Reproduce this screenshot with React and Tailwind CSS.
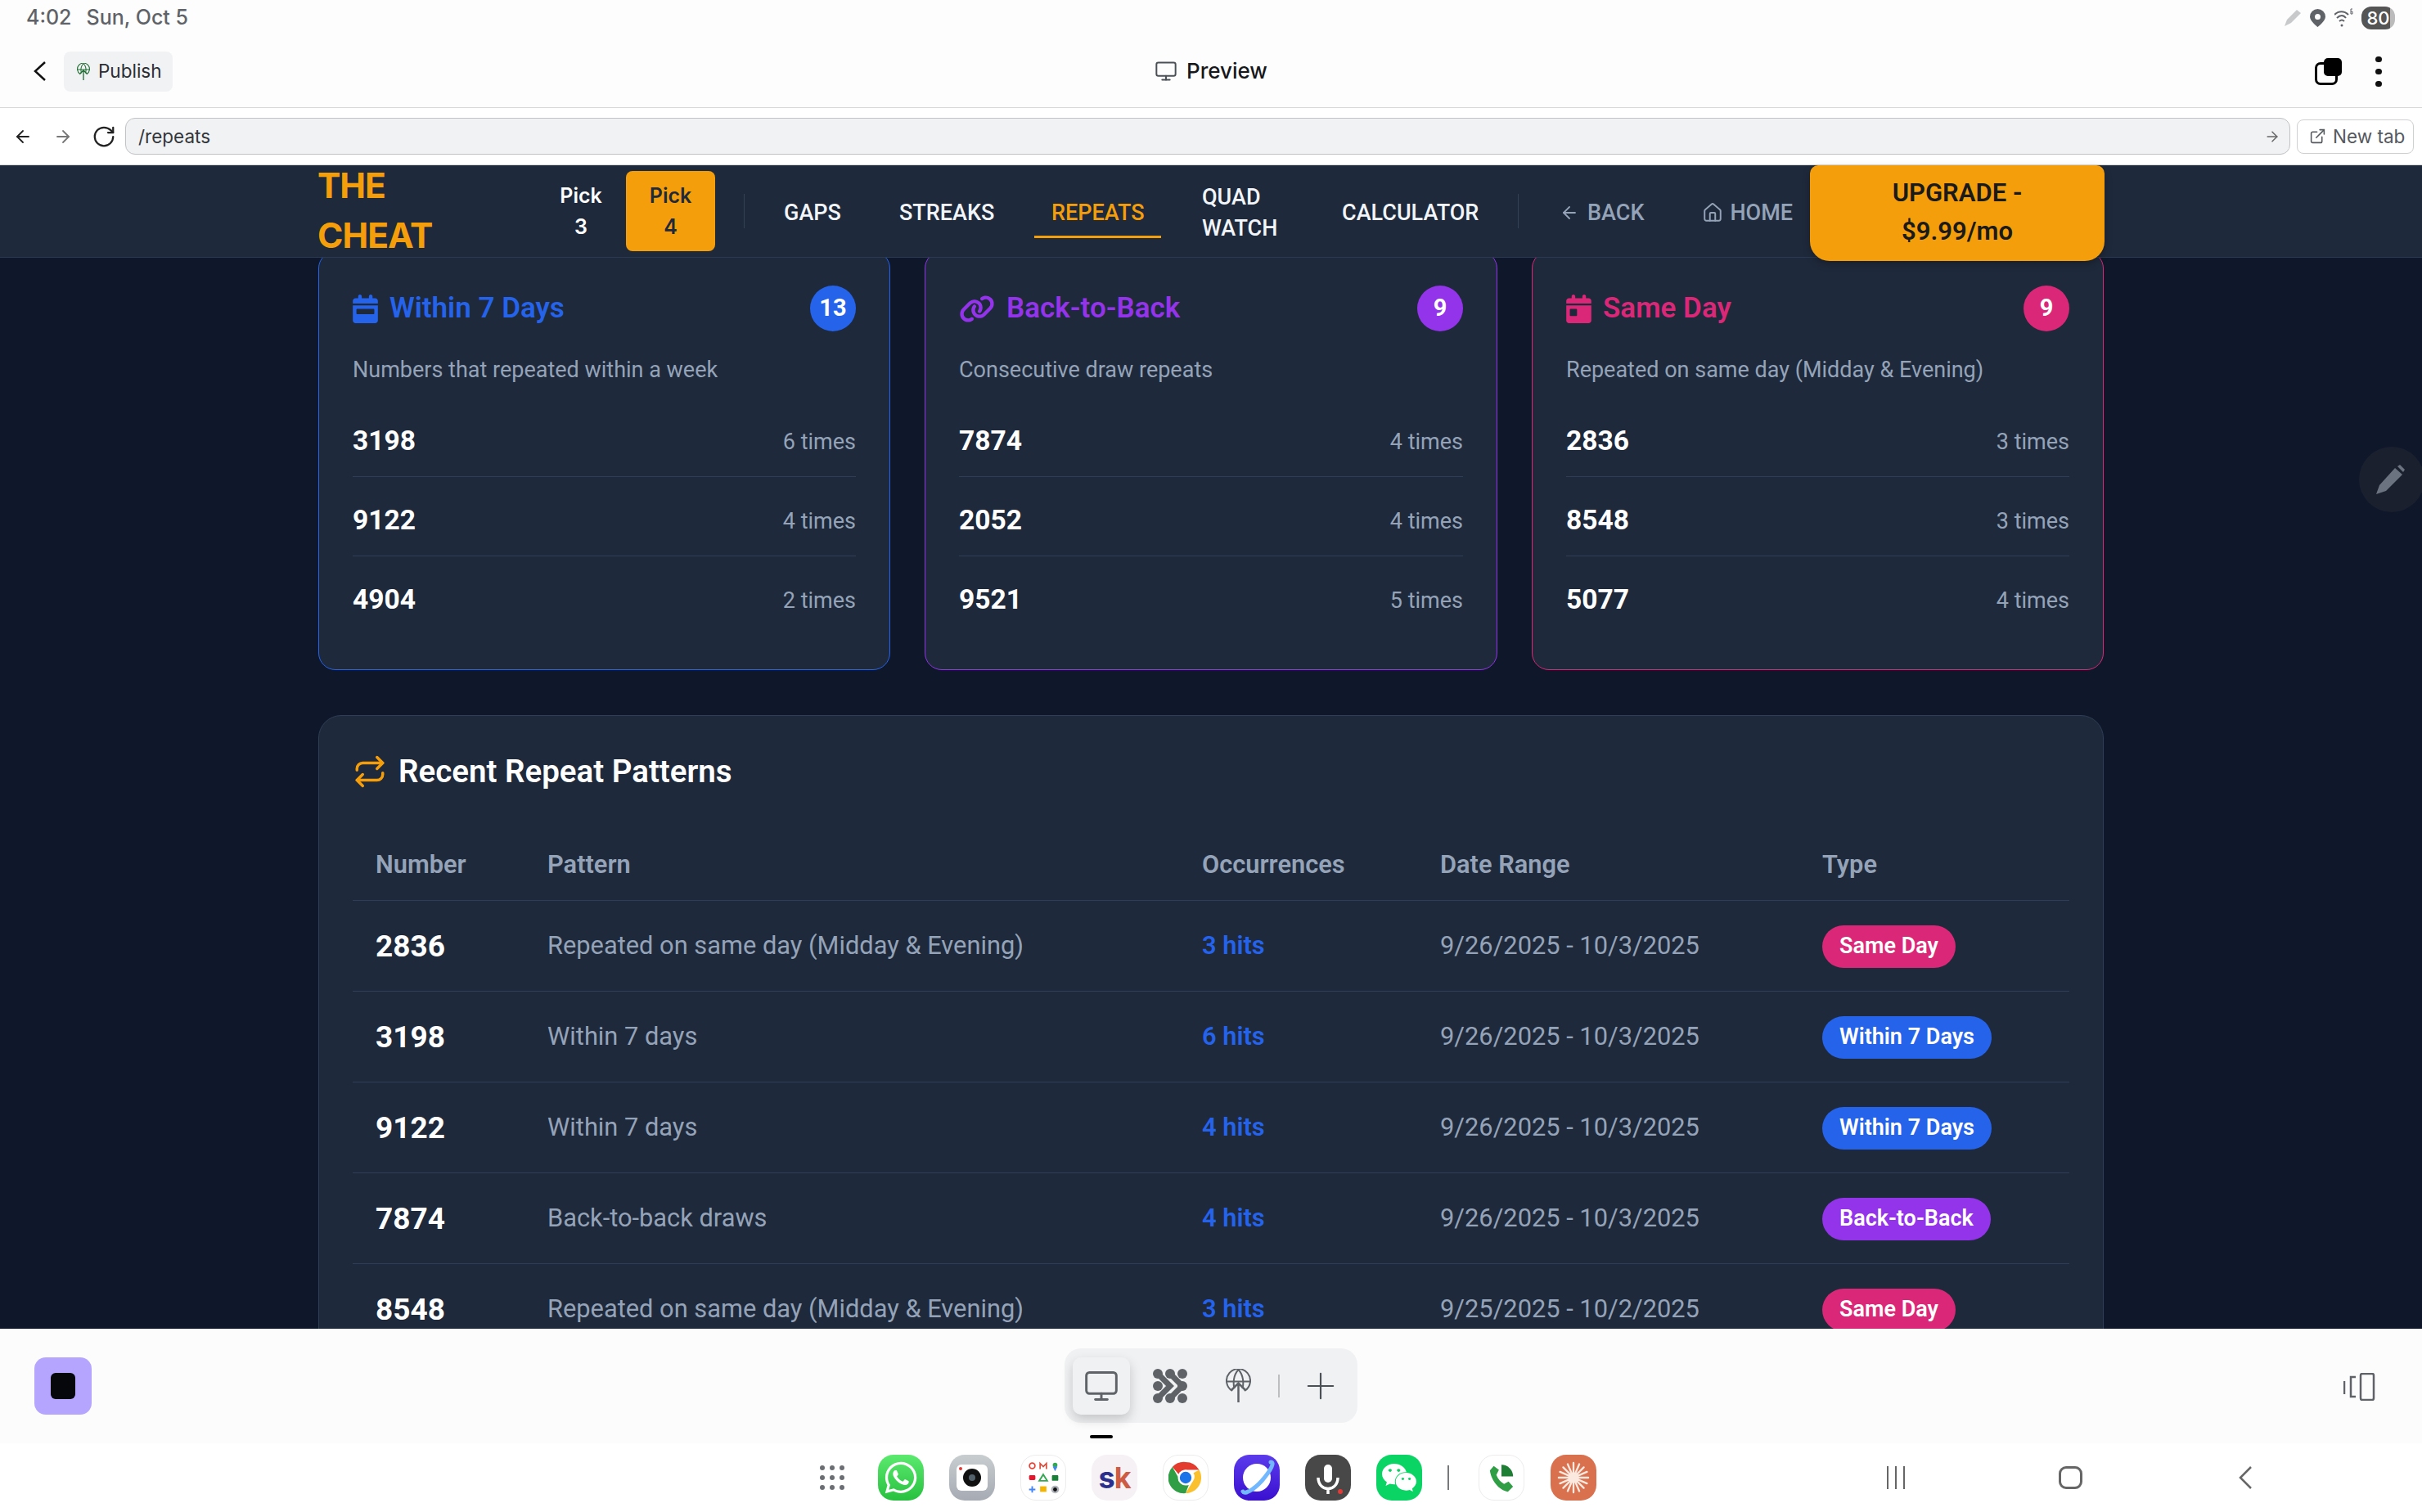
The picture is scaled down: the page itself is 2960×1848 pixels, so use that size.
import React from "react";
import {
  ArrowLeft,
  ArrowRight,
  ExternalLink,
  House,
  Monitor,
  Plus,
  Repeat,
  RotateCw,
} from "lucide-react";
import { FaCalendarDay, FaCalendarWeek, FaLink, FaWeixin, FaWhatsapp } from "react-icons/fa6";

const cards = [
  {
    title: "Within 7 Days",
    count: 13,
    desc: "Numbers that repeated within a week",
    Icon: FaCalendarWeek,
    iconSize: "w-[31px] h-[35px]",
    border: "border-[#2563eb]",
    text: "text-[#2563eb]",
    bg: "bg-[#2563eb]",
    rows: [["3198", "6 times"], ["9122", "4 times"], ["4904", "2 times"]],
  },
  {
    title: "Back-to-Back",
    count: 9,
    desc: "Consecutive draw repeats",
    Icon: FaLink,
    iconSize: "w-[44px] h-[35px]",
    border: "border-[#9333ea]",
    text: "text-[#9333ea]",
    bg: "bg-[#9333ea]",
    rows: [["7874", "4 times"], ["2052", "4 times"], ["9521", "5 times"]],
  },
  {
    title: "Same Day",
    count: 9,
    desc: "Repeated on same day (Midday & Evening)",
    Icon: FaCalendarDay,
    iconSize: "w-[31px] h-[35px]",
    border: "border-[#db2777]",
    text: "text-[#db2777]",
    bg: "bg-[#db2777]",
    rows: [["2836", "3 times"], ["8548", "3 times"], ["5077", "4 times"]],
  },
];

const patterns = [
  ["2836", "Repeated on same day (Midday & Evening)", "3 hits", "9/26/2025 - 10/3/2025", "Same Day", "bg-[#db2777]"],
  ["3198", "Within 7 days", "6 hits", "9/26/2025 - 10/3/2025", "Within 7 Days", "bg-[#2563eb]"],
  ["9122", "Within 7 days", "4 hits", "9/26/2025 - 10/3/2025", "Within 7 Days", "bg-[#2563eb]"],
  ["7874", "Back-to-back draws", "4 hits", "9/26/2025 - 10/3/2025", "Back-to-Back", "bg-[#9333ea]"],
  ["8548", "Repeated on same day (Midday & Evening)", "3 hits", "9/25/2025 - 10/2/2025", "Same Day", "bg-[#db2777]"],
];

const tableCols = "grid grid-cols-[210px_800px_291px_467px_330px]";

function GlobeUp({ color, className }) {
  return (
    <svg viewBox="0 0 31 41" fill="none" stroke={color} strokeWidth="2" className={className}>
      <path d="M8 27A14.5 14.5 0 1 1 23 27" />
      <path d="M1 15.5H30M15.5 1C9 8 9 18 10.5 24M15.5 1C22 8 22 18 20.5 24" />
      <path d="M15.5 41V18M7 26l8.500-8.500L24 26" strokeWidth="2.500" />
    </svg>
  );
}

function HubIcon() {
  return (
    <svg viewBox="0 0 42 42" className="w-[42px] h-[42px]" fill="#5f6368" stroke="#5f6368">
      <circle cx="6" cy="6" r="6" stroke="none" />
      <circle cx="21" cy="6" r="6" stroke="none" />
      <circle cx="36" cy="6" r="6" stroke="none" />
      <circle cx="6" cy="21" r="6" stroke="none" />
      <circle cx="36" cy="21" r="6" stroke="none" />
      <circle cx="6" cy="36" r="6" stroke="none" />
      <circle cx="21" cy="36" r="6" stroke="none" />
      <circle cx="36" cy="36" r="6" stroke="none" />
      <path d="M6 6L21 21L6 36M21 6L36 21L21 36" fill="none" strokeWidth="7" />
    </svg>
  );
}

function StatusBar() {
  return (
    <div className="h-[40px] pt-[3px] flex items-center justify-between pl-[32px] pr-[33px] bg-[#fdfdfd] text-[#5f6368] font-medium text-[25px]">
      <div className="flex gap-[18px]">
        <span>4:02</span>
        <span>Sun, Oct 5</span>
      </div>
      <div className="flex items-center">
        <svg viewBox="0 0 21 21" className="w-[21px] h-[21px]">
          <path d="M0 21L3 13L15 1L20 5L8 17Z" fill="#c8c9cb" />
        </svg>
        <svg viewBox="0 0 19 22" className="w-[19px] h-[22px] ml-[10px]">
          <path fillRule="evenodd" d="M9.500 0A9.500 9.500 0 0 0 0 9.500C0 15 9.500 22 9.500 22S19 15 19 9.500A9.500 9.500 0 0 0 9.500 0ZM9.500 6A3.500 3.500 0 1 1 9.500 13A3.500 3.500 0 0 1 9.500 6Z" fill="#5f6368" />
        </svg>
        <svg viewBox="0 0 23 24" className="w-[23px] h-[24px] ml-[11px]" fill="none" stroke="#5f6368" strokeWidth="2">
          <path d="M0 8C5 3 12 3 17 8M3 12C7 8 11 8 14 12M6 16C8 14 10 14 12 16" />
          <circle cx="9" cy="21" r="1.500" fill="#5f6368" stroke="none" />
          <path d="M22 1H20V7H22V4H20" strokeWidth="1" />
        </svg>
        <div className="ml-[10px] w-[41px] h-[28px] rounded-[12px] bg-[linear-gradient(90deg,#555_85%,#bbb_85%)] text-white text-[22px] leading-[28px] text-center">
          80
        </div>
      </div>
    </div>
  );
}

function AppBar() {
  return (
    <div className="h-[92px] pt-[3px] flex items-center bg-[#fdfdfd] border-b border-[#d8d8d8] relative">
      <svg viewBox="0 0 16 24" className="w-[16px] h-[24px] ml-[41px]" fill="none" stroke="#111" strokeWidth="2.500">
        <path d="M14 1L2 12L14 23" />
      </svg>
      <div className="ml-[21px] h-[49px] w-[133px] rounded-[8px] bg-[#f1f2f4] flex items-center pl-[16px] gap-[10px] text-[22.500px] text-[#2b2f33]">
        <GlobeUp color="#1b6b2e" className="w-[16px] h-[21px]" />
        Publish
      </div>
      <div className="absolute left-[1411px] top-[27px] flex items-center gap-[11px] text-[26px] font-medium text-[#16181b]">
        <Monitor size={28} strokeWidth={1.7} color="#4b5056" />
        Preview
      </div>
      <div className="ml-auto mr-[49px] flex items-center gap-[41px]">
        <div className="relative w-[33px] h-[33px]">
          <div className="absolute left-0 bottom-0 w-[28px] h-[28px] rounded-[7px] border-[3px] border-black" />
          <div className="absolute right-0 top-0 w-[22px] h-[22px] rounded-[5px] bg-black" />
        </div>
        <div className="flex flex-col gap-[8px] w-[8px]">
          <span className="w-[8px] h-[7px] rounded-full bg-[#111]" />
          <span className="w-[8px] h-[7px] rounded-full bg-[#111]" />
          <span className="w-[8px] h-[7px] rounded-full bg-[#111]" />
        </div>
      </div>
    </div>
  );
}

function UrlBar() {
  return (
    <div className="h-[70px] flex items-center bg-white border-b border-[#d8d8d8]">
      <ArrowLeft size={24} strokeWidth={1.8} color="#222" className="ml-[16px]" />
      <ArrowRight size={24} strokeWidth={1.8} color="#777" className="ml-[25px]" />
      <RotateCw size={30} strokeWidth={1.8} color="#222" className="ml-[23px]" />
      <div className="ml-[11px] w-[2646px] h-[45px] rounded-[12px] bg-[#f1f2f4] border border-[#c0c2c5] flex items-center justify-between pl-[15px] pr-[11px] text-[22.500px] text-[#33373b]">
        /repeats
        <ArrowRight size={20} strokeWidth={1.8} color="#666" />
      </div>
      <div className="ml-[8px] w-[143px] h-[42px] rounded-[8px] border border-[#cfd0d2] flex items-center pl-[14px] gap-[8px] text-[22.500px] text-[#55595e]">
        <ExternalLink size={21} strokeWidth={1.8} color="#55595e" />
        New tab
      </div>
    </div>
  );
}

function NavLink({ children, className }) {
  return (
    <div className={`h-[70px] pt-[3px] flex items-center px-[21px] text-[27px] font-medium leading-[38px] ${className}`}>
      {children}
    </div>
  );
}

function TopNav() {
  return (
    <div className="h-[113px] relative z-10 flex items-center pl-[389px] bg-[#1e293b] border-b border-[#2b3a52] font-[Roboto,sans-serif]">
      <div className="w-[267px] -ml-[1px] mr-[1px] text-[#f59e0b] text-[42.500px] leading-[61px] font-bold font-[Inter,sans-serif] tracking-[-1px] -mt-[3px]">
        THE
        <br />
        CHEAT
      </div>
      <div className="w-[108px] text-center text-white text-[25px] font-semibold leading-[38px] font-[Inter,sans-serif]">
        Pick
        <br />3
      </div>
      <div className="ml-[1px] w-[109px] h-[98px] rounded-[8px] bg-[#f59e0b] flex items-center justify-center text-center text-[#1e293b] text-[25px] font-semibold leading-[38px] font-[Inter,sans-serif]">
        <span>
          Pick
          <br />4
        </span>
      </div>
      <div className="ml-[35px] w-[1px] h-[42px] bg-[#334155]" />
      <div className="ml-[27px] flex items-center gap-[29px] text-[#f1f5f9]">
        <NavLink className="w-[112px]">GAPS</NavLink>
        <NavLink className="w-[157px]">STREAKS</NavLink>
        <div className="relative">
          <NavLink className="w-[155px] text-[#f59e0b]">REPEATS</NavLink>
          <div className="absolute left-0 right-0 bottom-[2px] h-[3px] bg-[#f59e0b]" />
        </div>
        <NavLink className="w-[142px]">
          <span>
            QUAD
            <br />
            WATCH
          </span>
        </NavLink>
        <NavLink className="w-[208px]">CALCULATOR</NavLink>
      </div>
      <div className="ml-[28px] w-[1px] h-[42px] bg-[#334155]" />
      <NavLink className="ml-[29px] text-[#94a3b8] gap-[10px]">
        <ArrowLeft size={24} strokeWidth={1.8} />
        BACK
      </NavLink>
      <NavLink className="ml-[29px] text-[#94a3b8] gap-[8px] pr-0">
        <House size={26} strokeWidth={1.8} />
        HOME
      </NavLink>
      <div className="absolute left-[2212px] top-0 w-[360px] h-[117px] pb-[4px] rounded-b-[24px] rounded-t-[10px] bg-[#f59e0b] shadow-[0_4px_10px_rgba(0,0,0,0.25)] flex items-center justify-center text-center text-[#1a1a1a] text-[31px] font-semibold leading-[47px]">
        <span>
          UPGRADE -
          <br />
          $9.99/mo
        </span>
      </div>
    </div>
  );
}

function RepeatCard({ card }) {
  const { Icon } = card;
  return (
    <div className={`rounded-[21px] border bg-[#1e293b] p-[41px] ${card.border}`}>
      <div className="flex items-center justify-between h-[56px]">
        <div className={`flex items-center gap-[14px] text-[35px] font-semibold ${card.text}`}>
          <Icon className={card.iconSize} />
          {card.title}
        </div>
        <div className={`w-[56px] h-[56px] rounded-full flex items-center justify-center text-white text-[29px] font-bold ${card.bg}`}>
          {card.count}
        </div>
      </div>
      <div className="mt-[26px] text-[#94a3b8] text-[27px] leading-[42px]">{card.desc}</div>
      <div className="mt-[13px]">
        {card.rows.map(([num, times], i) => (
          <div
            key={num}
            className={`h-[97px] pt-[29px] flex justify-between items-start ${i < 2 ? "border-b border-[#2f3d55]" : ""}`}
          >
            <span className="text-white text-[33.600px] leading-[47px] font-bold">{num}</span>
            <span className="text-[#94a3b8] text-[27px] leading-[47px] pt-[2px]">{times}</span>
          </div>
        ))}
      </div>
    </div>
  );
}

function PatternsPanel() {
  return (
    <div className="mt-[55px] rounded-[28px] border border-[#2f3d55] bg-[#1e293b] pt-[41px] px-[41px]">
      <div className="h-[54px] flex items-center gap-[14px] text-white text-[38.500px] font-semibold">
        <Repeat size={42} color="#f59e0b" strokeWidth={2} />
        Recent Repeat Patterns
      </div>
      <div className={`${tableCols} mt-[43px] h-[88px] pt-[1px] items-center border-b border-[#2f3d55] text-[#94a3b8] text-[30.800px] font-semibold`}>
        {["Number", "Pattern", "Occurrences", "Date Range", "Type"].map((h) => (
          <div key={h} className="px-[28px]">
            {h}
          </div>
        ))}
      </div>
      {patterns.map(([num, pattern, hits, range, type, bg], i) => (
        <div key={num + i} className={`${tableCols} h-[111px] pt-[1px] items-center border-b border-[#2f3d55]`}>
          <div className="px-[28px] text-white text-[37px] font-bold">{num}</div>
          <div className="px-[28px] text-[#94a3b8] text-[30.800px]">{pattern}</div>
          <div className="px-[28px] text-[#2563eb] text-[30.800px] font-semibold">{hits}</div>
          <div className="px-[28px] text-[#94a3b8] text-[30.800px]">{range}</div>
          <div className="px-[28px]">
            <span className={`inline-flex items-center h-[52px] px-[21px] rounded-full text-white text-[27px] font-semibold ${bg}`}>
              {type}
            </span>
          </div>
        </div>
      ))}
    </div>
  );
}

function BottomBar() {
  return (
    <div className="h-[140px] bg-[#fcfcfc] relative flex items-center pl-[42px]">
      <div className="w-[70px] h-[70px] rounded-[14px] bg-[#b5a5ff] flex items-center justify-center">
        <div className="w-[30px] h-[32px] rounded-[6px] bg-[#05070a]" />
      </div>
      <div className="ml-[1189px] -mt-[1px] w-[358px] h-[91px] rounded-[20px] bg-[#f0f1f3] flex items-center pl-[10px]">
        <div className="w-[70px] h-[70px] rounded-[10px] bg-[#f0f1f3] shadow-[0_6px_14px_rgba(0,0,0,0.18)] flex items-center justify-center">
          <Monitor size={44} strokeWidth={1.6} color="#5f6368" />
        </div>
        <div className="ml-[28px]">
          <HubIcon />
        </div>
        <GlobeUp color="#5f6368" className="ml-[47px] w-[31px] h-[41px]" />
        <div className="ml-[33px] w-[2px] h-[28px] bg-[#bdbec0]" />
        <Plus size={52} strokeWidth={1} color="#4b5056" className="ml-[24px]" />
      </div>
      <div className="absolute left-[1332px] top-[130px] w-[28px] h-[4px] rounded-full bg-black" />
      <svg viewBox="0 0 39 34" className="absolute left-[2864px] top-[54px] w-[39px] h-[34px]" fill="none" stroke="#5f6368" strokeWidth="2.500">
        <path d="M1 10V26M15 5H9V29H15" />
        <rect x="21" y="1" width="16" height="32" rx="2" />
      </svg>
    </div>
  );
}

function AppIcon({ className, children }) {
  return (
    <div className={`w-[56px] h-[56px] rounded-[19px] flex items-center justify-center overflow-hidden ${className}`}>
      {children}
    </div>
  );
}

function Dock() {
  return (
    <div className="h-[84px] bg-white flex items-center pl-[1002px]">
      <div className="w-[30px] grid grid-cols-3 gap-[6px]">
        {[0, 1, 2, 3, 4, 5, 6, 7, 8].map((d) => (
          <span key={d} className="w-[6px] h-[6px] rounded-full bg-[#6b6e72]" />
        ))}
      </div>
      <div className="ml-[41px] flex items-center gap-[31px]">
        <AppIcon className="bg-[linear-gradient(180deg,#5bea6e,#28c03f)]">
          <FaWhatsapp size={44} color="white" />
        </AppIcon>
        <AppIcon className="bg-[linear-gradient(180deg,#c8cdd0,#a6abb4)]">
          <div className="w-[38px] h-[32px] rounded-[6px] bg-white flex items-center justify-center relative">
            <div className="w-[22px] h-[22px] rounded-full bg-[#111] flex items-center justify-center">
              <div className="w-[8px] h-[8px] rounded-full bg-[#54616b]" />
            </div>
            <div className="absolute left-[3px] top-[3px] w-[4px] h-[4px] rounded-full bg-[#e53935]" />
          </div>
        </AppIcon>
        <AppIcon className="bg-white border border-[#ececec]">
          <svg viewBox="0 0 56 56" className="w-[56px] h-[56px]">
            <circle cx="14" cy="13" r="3.500" fill="none" stroke="#ea4335" strokeWidth="1.800" />
            <path d="M24 17V10L28 14L32 10V17" fill="none" stroke="#d9503f" strokeWidth="1.800" />
            <circle cx="43" cy="12" r="3" fill="#34a853" />
            <path d="M43 20L40 14H46Z" fill="#4285f4" />
            <rect x="10" y="25" width="8" height="6" rx="1.500" fill="#e8152c" />
            <path d="M28 24L33 32H23Z" fill="none" stroke="#34a853" strokeWidth="2" />
            <rect x="39" y="25" width="8" height="7" rx="1" fill="#188038" />
            <path d="M10 43H18M14 39V47" stroke="#4285f4" strokeWidth="2" />
            <rect x="24" y="39" width="8" height="7" fill="#f4b400" />
            <circle cx="43" cy="43" r="5" fill="#b0b4ba" />
            <circle cx="43" cy="43" r="2.500" fill="#111" />
          </svg>
        </AppIcon>
        <AppIcon className="bg-[#f6f1f5] text-[36px] font-bold font-[Inter,sans-serif] leading-none tracking-[-1px]">
          <span className="text-[#2a2f8f]">s</span>
          <span className="text-[#cd5c42]">k</span>
        </AppIcon>
        <AppIcon className="bg-white border border-[#ececec]">
          <svg viewBox="0 0 44 44" className="w-[42px] h-[42px]">
            <path d="M22 2A20 20 0 0 1 39.300 12H22A10 10 0 0 0 13 17.500L5 8.500A20 20 0 0 1 22 2Z" fill="#e33b2e" />
            <path d="M39.300 12A20 20 0 0 1 22 42L31 27A10 10 0 0 0 32 16Z" fill="#fbc02d" />
            <path d="M5 8.500L14 24A10 10 0 0 0 26 31.500L22 42A20 20 0 0 1 5 8.500Z" fill="#2f9e44" />
            <circle cx="22" cy="22" r="10" fill="white" />
            <circle cx="22" cy="22" r="7.500" fill="#1a73e8" />
          </svg>
        </AppIcon>
        <AppIcon className="bg-[linear-gradient(180deg,#5b3bec,#3a10d0)]">
          <svg viewBox="0 0 56 56" className="w-[56px] h-[56px]">
            <circle cx="28" cy="28" r="17" fill="white" />
            <path d="M45 9C50 9 46 18 34 32C24 43 13 49 11 45" fill="none" stroke="#72b8ff" strokeWidth="5" strokeLinecap="round" />
          </svg>
        </AppIcon>
        <AppIcon className="bg-[#484848]">
          <svg viewBox="0 0 56 56" className="w-[56px] h-[56px]" fill="none" stroke="white" strokeWidth="3.500">
            <rect x="23" y="12" width="10" height="22" rx="5" fill="white" stroke="none" />
            <path d="M16 28C16 46 40 46 40 28M28 40V48" />
            <circle cx="43" cy="45" r="3" fill="#e53935" stroke="none" />
          </svg>
        </AppIcon>
        <AppIcon className="bg-[#0ad463]">
          <FaWeixin size={44} color="white" />
        </AppIcon>
      </div>
      <div className="ml-[31px] w-[2px] h-[30px] bg-[#77797c]" />
      <AppIcon className="ml-[36px] bg-white border border-[#ececec]">
        <svg viewBox="0 0 56 56" className="w-[44px] h-[44px]">
          <path d="M16 10L24 16L20 24C23 31 27 35 32 38L39 34L46 42L38 50C24 48 12 32 10 17Z" fill="#2f9e44" />
          <path d="M28 8A18 18 0 0 1 46 26H28Z" fill="#1e7e34" />
        </svg>
      </AppIcon>
      <AppIcon className="ml-[32px] bg-[#d9714f]">
        <svg viewBox="0 0 56 56" className="w-[44px] h-[44px]" stroke="#fbe8df" strokeWidth="3" strokeLinecap="round">
          <path d="M28 5V51M5 28H51M12 12L44 44M44 12L12 44M19 7L37 49M37 7L19 49M7 19L49 37M49 19L7 37" />
        </svg>
      </AppIcon>
      <div className="ml-[355px] flex gap-[8px] h-[28px]">
        <span className="w-[2px] bg-[#666]" />
        <span className="w-[2px] bg-[#666]" />
        <span className="w-[2px] bg-[#666]" />
      </div>
      <div className="ml-[188px] w-[29px] h-[28px] rounded-[9px] border-[3px] border-[#666]" />
      <svg viewBox="0 0 18 30" className="ml-[190px] w-[18px] h-[30px]" fill="none" stroke="#666" strokeWidth="2.500">
        <path d="M16 2L3 15L16 28" />
      </svg>
    </div>
  );
}

export default function App() {
  return (
    <div className="w-[2960px] h-[1848px] flex flex-col overflow-hidden bg-white font-[Inter,sans-serif]">
      <StatusBar />
      <AppBar />
      <UrlBar />
      <TopNav />
      <main className="relative flex-1 overflow-hidden bg-[#0f172a] px-[389px] font-[Roboto,sans-serif]">
        <div className="-mt-[8px] grid grid-cols-[699px_700px_699px] gap-[42px]">
          {cards.map((card) => (
            <RepeatCard key={card.title} card={card} />
          ))}
        </div>
        <PatternsPanel />
        <div className="absolute left-[2883px] top-[231px] w-[80px] h-[80px] rounded-full bg-[#1a202e] flex items-center justify-center">
          <svg viewBox="0 0 38 38" className="w-[38px] h-[38px] -ml-[3px]">
            <path d="M1 37L5 26L24 5L33 13L13 33Z" fill="#6b7280" />
            <path d="M27 3L30 1L36 7L34 10Z" fill="#6b7280" />
          </svg>
        </div>
      </main>
      <BottomBar />
      <Dock />
    </div>
  );
}
